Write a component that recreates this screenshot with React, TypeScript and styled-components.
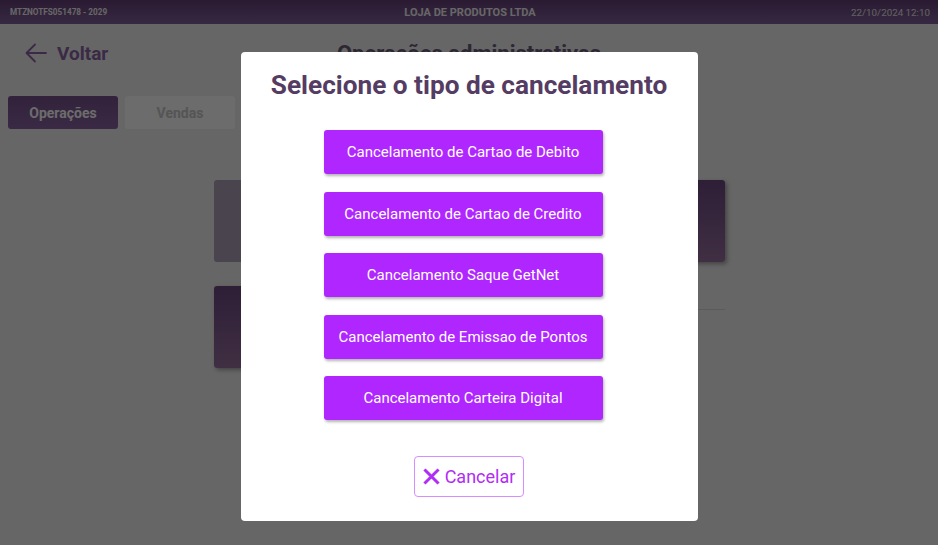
import React, { FC } from 'react';
import styled, { createGlobalStyle } from 'styled-components';

const GlobalStyle = createGlobalStyle`
  html, body {
    margin: 0;
    padding: 0;
    background: #f0f0f0;
    font-family: Roboto, 'Liberation Sans', sans-serif;
  }
  * { box-sizing: border-box; }
`;

const OPTIONS = [
  'Cancelamento de Cartao de Debito',
  'Cancelamento de Cartao de Credito',
  'Cancelamento Saque GetNet',
  'Cancelamento de Emissao de Pontos',
  'Cancelamento Carteira Digital',
];

const App: FC = () => {
  return (
    <Screen>
      <GlobalStyle />
      <TopBar>
        <BarId>MTZNOTFS051478 - 2029</BarId>
        <BarStore>LOJA DE PRODUTOS LTDA</BarStore>
        <BarDate>22/10/2024 12:10</BarDate>
      </TopBar>

      <Page>
        <TitleRow>
          <BackLink>
            <svg width="22" height="20" viewBox="0 0 22 20" fill="none">
              <path d="M21 10H2M10 1.5L1.5 10L10 18.5" stroke="currentColor" strokeWidth="1.8" strokeLinecap="round" strokeLinejoin="round" />
            </svg>
            Voltar
          </BackLink>
          <PageTitle>Operações administrativas</PageTitle>
          <span />
        </TitleRow>

        <Tabs>
          <Tab $active>Operações</Tab>
          <Tab>Vendas</Tab>
        </Tabs>

        <CardGrid>
          <Card $disabled />
          <Card />
          <Card />
          <Divider />
        </CardGrid>
      </Page>

      <Overlay>
        <Modal>
          <ModalTitle>Selecione o tipo de cancelamento</ModalTitle>
          <OptionList>
            {OPTIONS.map((o) => (
              <OptionButton key={o}>{o}</OptionButton>
            ))}
          </OptionList>
          <CancelButton>
            <svg width="17" height="17" viewBox="0 0 17 17">
              <path d="M2.5 2.5L14.5 14.5M14.5 2.5L2.5 14.5" stroke="currentColor" strokeWidth="3" strokeLinecap="square" />
            </svg>
            Cancelar
          </CancelButton>
        </Modal>
      </Overlay>
    </Screen>
  );
};

const Screen = styled.div`
  position: relative;
  width: 938px;
  height: 545px;
  overflow: hidden;
  background: #f0f0f0;
`;

const TopBar = styled.div`
  height: 24px;
  display: grid;
  grid-template-columns: 1fr auto 1fr;
  align-items: center;
  padding: 0 8px 0 10px;
  background: linear-gradient(180deg, #623e77 0%, #84619c 100%);
  color: #f2f2f2;
`;

const BarId = styled.div`
  font-size: 8.2px;
  font-weight: 700;
`;

const BarStore = styled.div`
  font-size: 11px;
  font-weight: 700;
`;

const BarDate = styled.div`
  font-size: 9.8px;
  text-align: right;
  color: #e6e6e6;
`;

const Page = styled.div`
  padding: 0 8px;
`;

const TitleRow = styled.div`
  display: grid;
  grid-template-columns: 1fr auto 1fr;
  align-items: center;
  height: 58px;
`;

const BackLink = styled.div`
  display: flex;
  align-items: center;
  gap: 10px;
  padding-left: 17px;
  font-size: 19px;
  font-weight: 700;
  color: #8c63a6;
`;

const PageTitle = styled.div`
  font-size: 22px;
  font-weight: 700;
  color: #6a5a78;
`;

const Tabs = styled.div`
  display: flex;
  gap: 7px;
  margin-top: 14px;
`;

const Tab = styled.div<{ $active?: boolean }>`
  width: 110px;
  height: 33px;
  display: flex;
  align-items: center;
  justify-content: center;
  border-radius: 3px;
  font-size: 14px;
  font-weight: 700;
  background: ${(p) => (p.$active ? 'linear-gradient(180deg, #76508c, #8a63a2)' : '#ffffff')};
  color: ${(p) => (p.$active ? '#ffffff' : '#c8c8c8')};
`;

const CardGrid = styled.div`
  width: 511px;
  margin: 51px auto 0;
  display: grid;
  grid-template-columns: 1fr 1fr;
  column-gap: 24px;
  row-gap: 24px;
`;

const Card = styled.div<{ $disabled?: boolean }>`
  height: 82px;
  border-radius: 3px;
  background: ${(p) => (p.$disabled ? '#aea0ba' : 'linear-gradient(180deg, #6c4882 0%, #98709f 100%)')};
  box-shadow: ${(p) => (p.$disabled ? 'none' : '2px 2px 4px rgba(0, 0, 0, 0.35)')};
`;

const Divider = styled.div`
  height: 24px;
  border-bottom: 1px solid #d8d8d8;
`;

const Overlay = styled.div`
  position: absolute;
  inset: 0;
  background: rgba(0, 0, 0, 0.575);
  display: flex;
  justify-content: center;
  align-items: flex-start;
  padding-top: 52px;
`;

const Modal = styled.div`
  width: 457px;
  height: 469px;
  background: #ffffff;
  border-radius: 4px;
  padding: 16px 0 24px;
  display: flex;
  flex-direction: column;
  align-items: center;
`;

const ModalTitle = styled.div`
  font-size: 26.2px;
  line-height: 34px;
  font-weight: 700;
  color: #553c63;
`;

const OptionList = styled.div`
  margin-top: 28px;
  margin-right: 12px;
  display: flex;
  flex-direction: column;
  gap: 17.5px;
`;

const OptionButton = styled.button`
  width: 279px;
  height: 44px;
  border: none;
  border-radius: 3px;
  background: #b026ff;
  color: #ffffff;
  font-family: Roboto, 'Liberation Sans', sans-serif;
  font-size: 15px;
  box-shadow: 1px 2px 3px rgba(0, 0, 0, 0.3);
  cursor: pointer;
`;

const CancelButton = styled.button`
  margin-top: 36px;
  width: 110px;
  height: 41px;
  display: flex;
  align-items: center;
  justify-content: center;
  gap: 5px;
  background: #ffffff;
  border: 1px solid #d58dff;
  border-radius: 4px;
  color: #b12cf5;
  font-family: Roboto, 'Liberation Sans', sans-serif;
  font-size: 18px;
  cursor: pointer;
`;

export default App;
